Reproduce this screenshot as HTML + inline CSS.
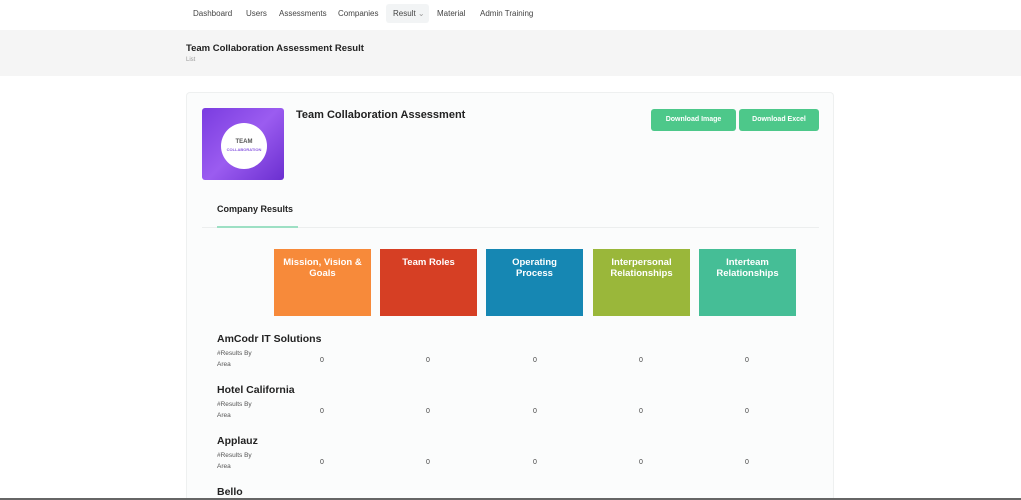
<!DOCTYPE html>
<html><head><style>
*{margin:0;padding:0;box-sizing:border-box}
html,body{width:1021px;height:500px;overflow:hidden}
body{background:#fff;font-family:"Liberation Sans",sans-serif;position:relative;color:#222}
.a{position:absolute}
.nav span{position:absolute;top:9px;font-size:8px;color:#444}
.box{position:absolute;top:249px;width:97px;height:67px;color:#fff;font-weight:bold;font-size:9.5px;text-align:center;padding-top:8px;line-height:11px}
.cn{position:absolute;left:217px;font-size:10.5px;font-weight:bold;color:#222}
.sl{position:absolute;left:217px;font-size:6.5px;color:#555;line-height:11px}
.v{position:absolute;font-size:7px;color:#444}
</style></head><body>
<div class="nav">
<span style="left:193px">Dashboard</span>
<span style="left:246px">Users</span>
<span style="left:279px">Assessments</span>
<span style="left:338px">Companies</span>
<div class="a" style="left:386px;top:4px;width:43px;height:19px;background:#f2f4f5;border-radius:3px"></div>
<span style="left:393px">Result <span style="position:static;color:#999">⌄</span></span>
<span style="left:437px">Material</span>
<span style="left:480px">Admin Training</span>
</div>
<div class="a" style="left:0;top:30px;width:1021px;height:46px;background:#f5f5f5"></div>
<div class="a" style="left:186px;top:43px;font-size:9.5px;font-weight:bold">Team Collaboration Assessment Result</div>
<div class="a" style="left:186px;top:57px;font-size:6px;color:#999">List</div>
<div class="a" style="left:186px;top:92px;width:648px;height:406px;background:#fbfcfc;border:1px solid #eef0f0;border-bottom:none;border-radius:4px 4px 0 0"></div>
<div class="a" style="left:202px;top:108px;width:82px;height:72px;background:linear-gradient(135deg,#7a3ce0,#9b5cf0 50%,#6b2fd0);border-radius:3px"></div>
<div class="a" style="left:221px;top:123px;width:46px;height:46px;border-radius:50%;background:#fff;text-align:center;font-weight:bold;font-size:6px;color:#555;padding-top:16px;line-height:7px">TEAM<br><span style="color:#8a5ae0;font-size:4px">COLLABORATION</span></div>
<div class="a" style="left:296px;top:109px;font-size:11px;font-weight:bold">Team Collaboration Assessment</div>
<div class="a" style="left:651px;top:109px;width:85px;height:22px;background:#4dc88a;border-radius:3px;color:#fff;font-size:7px;font-weight:bold;text-align:center;line-height:22px">Download Image</div>
<div class="a" style="left:739px;top:109px;width:80px;height:22px;background:#4dc88a;border-radius:3px;color:#fff;font-size:7px;font-weight:bold;text-align:center;line-height:22px">Download Excel</div>
<div class="a" style="left:217px;top:204px;font-size:9px;font-weight:bold">Company Results</div>
<div class="a" style="left:202px;top:227px;width:617px;height:1px;background:#eceeee"></div>
<div class="a" style="left:217px;top:226px;width:81px;height:2px;background:#9de0c4"></div>
<div class="box" style="left:274px;background:#f78a3a">Mission, Vision &amp;<br>Goals</div>
<div class="box" style="left:380px;background:#d63f24">Team Roles</div>
<div class="box" style="left:486px;background:#1687b3">Operating<br>Process</div>
<div class="box" style="left:593px;background:#9ab73a">Interpersonal<br>Relationships</div>
<div class="box" style="left:699px;background:#45be96">Interteam<br>Relationships</div>

<div class="cn" style="top:333px">AmCodr IT Solutions</div>
<div class="sl" style="top:348px">#Results By<br>Area</div>
<div class="v" style="left:320px;top:357px">0</div><div class="v" style="left:426px;top:357px">0</div><div class="v" style="left:533px;top:357px">0</div><div class="v" style="left:639px;top:357px">0</div><div class="v" style="left:745px;top:357px">0</div>

<div class="cn" style="top:384px">Hotel California</div>
<div class="sl" style="top:399px">#Results By<br>Area</div>
<div class="v" style="left:320px;top:408px">0</div><div class="v" style="left:426px;top:408px">0</div><div class="v" style="left:533px;top:408px">0</div><div class="v" style="left:639px;top:408px">0</div><div class="v" style="left:745px;top:408px">0</div>

<div class="cn" style="top:435px">Applauz</div>
<div class="sl" style="top:450px">#Results By<br>Area</div>
<div class="v" style="left:320px;top:459px">0</div><div class="v" style="left:426px;top:459px">0</div><div class="v" style="left:533px;top:459px">0</div><div class="v" style="left:639px;top:459px">0</div><div class="v" style="left:745px;top:459px">0</div>

<div class="cn" style="top:486px">Bello</div>
<div class="a" style="left:0;top:498px;width:1021px;height:2px;background:#666"></div>
</body></html>
